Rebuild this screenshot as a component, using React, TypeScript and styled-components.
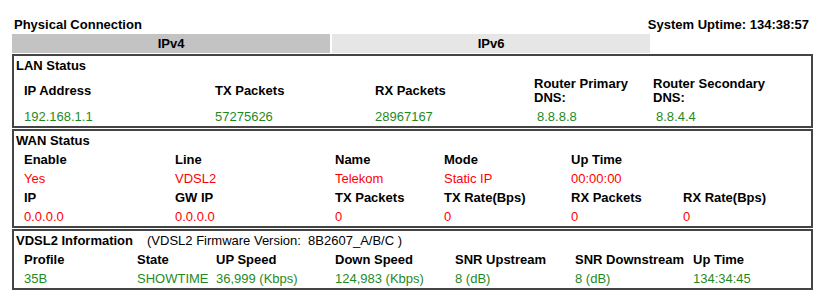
import React from "react";
import styled, { createGlobalStyle } from "styled-components";

const GlobalStyle = createGlobalStyle`
  body {
    margin: 0;
    background: #fff;
    font-family: "Liberation Sans", Arial, sans-serif;
    font-size: 13px;
    color: #000;
  }
`;

const Page = styled.div`
  width: 801px;
  padding: 16px 0 0 12px;
`;

const TitleRow = styled.div`
  display: flex;
  justify-content: space-between;
  align-items: center;
  height: 16px;
  padding: 0 4px 0 2px;
  font-weight: bold;
`;

const Tabs = styled.div`
  display: flex;
  gap: 2px;
  margin-top: 2px;
  width: 638px;
`;

const Tab = styled.div<{ active?: boolean }>`
  flex: 1;
  height: 19px;
  line-height: 19px;
  text-align: center;
  font-weight: bold;
  background: ${({ active }) => (active ? "#c3c3c3" : "#e6e6e6")};
`;

const Box = styled.section`
  border: 2px solid #444;
  margin-top: 1px;
`;

const BoxTitle = styled.div<{ h: number }>`
  display: flex;
  align-items: center;
  height: ${({ h }) => h}px;
  padding-left: 2px;
  font-weight: bold;
`;

const Note = styled.span`
  font-weight: normal;
  margin-left: 14px;
  white-space: pre;
`;

const Grid = styled.div<{ cols: string }>`
  display: grid;
  grid-template-columns: ${({ cols }) => cols};
  padding-left: 10px;
`;

const Head = styled.div<{ h?: number }>`
  display: flex;
  align-items: center;
  height: ${({ h }) => h ?? 19}px;
  font-weight: bold;
  line-height: 14px;
  white-space: nowrap;
`;

const Value = styled.div<{ tone: "green" | "red"; indent?: boolean }>`
  height: 19px;
  line-height: 19px;
  white-space: nowrap;
  padding-left: ${({ indent }) => (indent ? 3 : 0)}px;
  color: ${({ tone }) => (tone === "green" ? "#1f8a1f" : "#ff0000")};
`;

type Cell = { label: React.ReactNode; value: string; indent?: boolean };

const lan: Cell[] = [
  { label: "IP Address", value: "192.168.1.1" },
  { label: "TX Packets", value: "57275626" },
  { label: "RX Packets", value: "28967167" },
  { label: <>Router Primary<br />DNS:</>, value: "8.8.8.8", indent: true },
  { label: <>Router Secondary<br />DNS:</>, value: "8.8.4.4", indent: true },
];

const wanTop: Cell[] = [
  { label: "Enable", value: "Yes" },
  { label: "Line", value: "VDSL2" },
  { label: "Name", value: "Telekom" },
  { label: "Mode", value: "Static IP" },
  { label: "Up Time", value: "00:00:00" },
  { label: "", value: "" },
];

const wanBottom: Cell[] = [
  { label: "IP", value: "0.0.0.0" },
  { label: "GW IP", value: "0.0.0.0" },
  { label: "TX Packets", value: "0" },
  { label: "TX Rate(Bps)", value: "0" },
  { label: "RX Packets", value: "0" },
  { label: "RX Rate(Bps)", value: "0" },
];

const vdsl: Cell[] = [
  { label: "Profile", value: "35B" },
  { label: "State", value: "SHOWTIME" },
  { label: "UP Speed", value: "36,999 (Kbps)" },
  { label: "Down Speed", value: "124,983 (Kbps)" },
  { label: "SNR Upstream", value: "8 (dB)" },
  { label: "SNR Downstream", value: "8 (dB)" },
  { label: "Up Time", value: "134:34:45" },
];

function Rows({
  cells,
  cols,
  tone,
  headHeight,
}: {
  cells: Cell[];
  cols: string;
  tone: "green" | "red";
  headHeight?: number;
}) {
  return (
    <Grid cols={cols}>
      {cells.map((c, i) => (
        <Head key={"h" + i} h={headHeight}>
          <span>{c.label}</span>
        </Head>
      ))}
      {cells.map((c, i) => (
        <Value key={"v" + i} tone={tone} indent={c.indent}>
          {c.value}
        </Value>
      ))}
    </Grid>
  );
}

export default function App() {
  const wanCols = "151px 160px 109px 127px 112px 1fr";
  return (
    <Page>
      <GlobalStyle />
      <TitleRow>
        <span>Physical Connection</span>
        <span>System Uptime: 134:38:57</span>
      </TitleRow>
      <Tabs>
        <Tab active>IPv4</Tab>
        <Tab>IPv6</Tab>
      </Tabs>
      <Box>
        <BoxTitle h={19}>LAN Status</BoxTitle>
        <Rows cells={lan} cols="191px 160px 159px 119px 1fr" tone="green" headHeight={32} />
      </Box>
      <Box>
        <BoxTitle h={19}>WAN Status</BoxTitle>
        <Rows cells={wanTop} cols={wanCols} tone="red" />
        <Rows cells={wanBottom} cols={wanCols} tone="red" />
      </Box>
      <Box>
        <BoxTitle h={19}>
          VDSL2 Information
          <Note>(VDSL2 Firmware Version:  8B2607_A/B/C )</Note>
        </BoxTitle>
        <Rows cells={vdsl} cols="113px 79px 119px 120px 120px 118px 1fr" tone="green" />
      </Box>
    </Page>
  );
}
